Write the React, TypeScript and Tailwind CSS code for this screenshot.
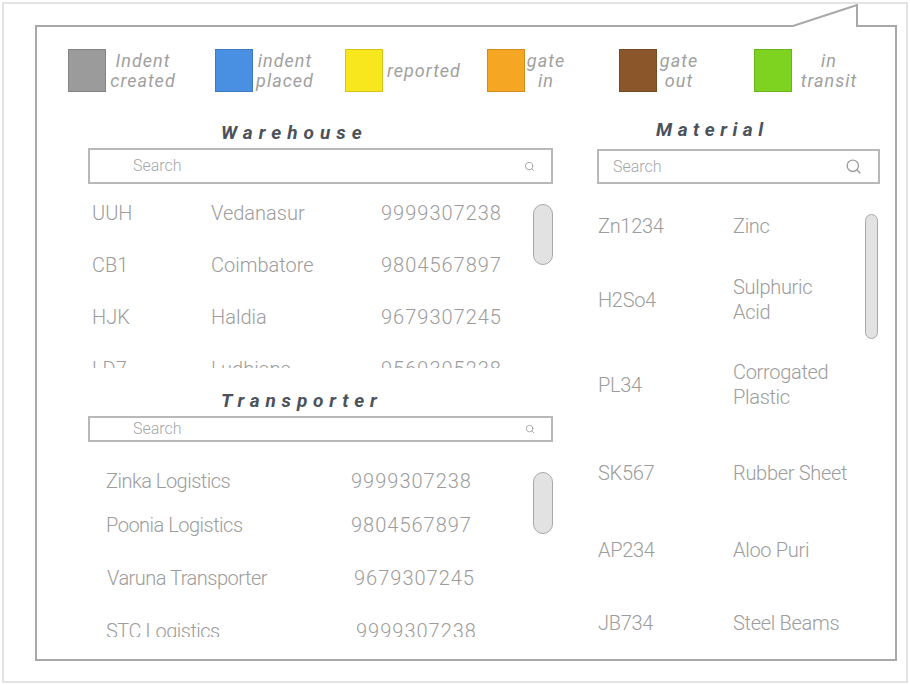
import React from "react";
import { Search } from "lucide-react";

type Legend = {
  label: string[];
  swatch: string;
  item: string;
  text: string;
};

const legend: Legend[] = [
  { label: ["Indent", "created"], swatch: "bg-[#9b9b9b]", item: "w-[147px]", text: "w-[74px]" },
  { label: ["indent", "placed"], swatch: "bg-[#4a90e2]", item: "w-[130px]", text: "w-[64px]" },
  { label: ["reported"], swatch: "bg-[#f8e71c]", item: "w-[142px]", text: "w-[82px]" },
  { label: ["gate", "in"], swatch: "bg-[#f5a623]", item: "w-[132px]", text: "w-[42px]" },
  { label: ["gate", "out"], swatch: "bg-[#8b572a]", item: "w-[135px]", text: "w-[44px]" },
  { label: ["in", "transit"], swatch: "bg-[#7ed321]", item: "w-[110px]", text: "w-[66px] ml-[4px]" },
];

const warehouses = [
  ["UUH", "Vedanasur", "9999307238"],
  ["CB1", "Coimbatore", "9804567897"],
  ["HJK", "Haldia", "9679307245"],
  ["LD7", "Ludhiana", "9569305238"],
];

const transporters = [
  { name: "Zinka Logistics", phone: "9999307238", row: "h-[44px]", ph: "ml-[0px]" },
  { name: "Poonia Logistics", phone: "9804567897", row: "h-[44px]", ph: "ml-[0px]" },
  { name: "Varuna Transporter", phone: "9679307245", row: "h-[62px] pl-[1px]", ph: "ml-[2px]" },
  { name: "STC Logistics", phone: "9999307238", row: "h-[44px]", ph: "ml-[5px]" },
];

const materials = [
  { code: "Zn1234", name: ["Zinc"], row: "h-[74px]" },
  { code: "H2So4", name: ["Sulphuric", "Acid"], row: "h-[74px]" },
  { code: "PL34", name: ["Corrogated", "Plastic"], row: "h-[96px]" },
  { code: "SK567", name: ["Rubber Sheet"], row: "h-[80px]" },
  { code: "AP234", name: ["Aloo Puri"], row: "h-[74px]" },
  { code: "JB734", name: ["Steel Beams"], row: "h-[72px]" },
];

function Thumb({ cls }: { cls: string }) {
  return (
    <div
      className={
        "rounded-full bg-[#e2e2e2] border-[1.5px] border-[#a9a9a9] " + cls
      }
    />
  );
}

function SearchBox({
  h,
  pad,
  icon,
}: {
  h: string;
  pad: string;
  icon: number;
}) {
  return (
    <div
      className={
        "flex items-center justify-between border-2 border-[#b8b8b8] pr-[16px] " +
        h +
        " " +
        pad
      }
    >
      <span className="text-[16px] font-light text-[#a6a6a6]">Search</span>
      <Search size={icon} strokeWidth={2} className="text-[#9f9f9f]" />
    </div>
  );
}

export default function App() {
  return (
    <div className="w-[910px] h-[685px] bg-white pt-[2px] pl-[2px] font-['Roboto',sans-serif]">
      <div className="w-[906px] h-[681px] border-2 border-[#e3e3e3]">
        <div className="relative ml-[31px] mt-[22px] w-[862px] h-[635px] border-l-2 border-r-2 border-b-2 border-[#a8a8a8]">
          <svg
            className="absolute left-[-2px] top-[-22px]"
            width="862"
            height="24"
            viewBox="0 0 862 24"
          >
            <path
              d="M0 22 H758 L822 1 V22 H862"
              fill="none"
              stroke="#a8a8a8"
              strokeWidth="2"
            />
          </svg>

          {/* legend */}
          <div className="flex pt-[23px] pl-[31px]">
            {legend.map((l) => (
              <div key={l.label.join(" ")} className={"flex items-center " + l.item}>
                <div
                  className={
                    "w-[38px] h-[43px] border border-black/15 shrink-0 " + l.swatch
                  }
                />
                <div
                  className={
                    "text-center italic text-[18px] leading-[20px] tracking-[1px] text-[#a0a0a0] " +
                    l.text
                  }
                >
                  {l.label.map((t) => (
                    <div key={t}>{t}</div>
                  ))}
                </div>
              </div>
            ))}
          </div>

          <div className="flex gap-[44px] pl-[51px] mt-[29px]">
            {/* left column */}
            <div className="w-[465px]">
              <h2 className="h-[24px] leading-[24px] pl-[133px] text-[19px] font-bold italic tracking-[6px] text-[#4b525c]">
                Warehouse
              </h2>
              <div className="mt-[3px]">
                <SearchBox h="h-[36px]" pad="pl-[43px]" icon={11} />
              </div>
              <div className="flex h-[182px] overflow-hidden mt-[2px]">
                <div className="flex-1 pt-[1px] pl-[4px]">
                  {warehouses.map((w) => (
                    <div
                      key={w[0]}
                      className="flex items-center h-[52px] text-[20px] font-light text-[#9c9c9c]"
                    >
                      <span className="w-[119px]">{w[0]}</span>
                      <span className="w-[170px]">{w[1]}</span>
                      <span className="tracking-[1px]">{w[2]}</span>
                    </div>
                  ))}
                </div>
                <div className="w-[20px] pt-[18px]">
                  <Thumb cls="w-[20px] h-[61px]" />
                </div>
              </div>

              <h2 className="mt-[21px] h-[24px] leading-[24px] pl-[133px] text-[19px] font-bold italic tracking-[5.8px] text-[#4b525c]">
                Transporter
              </h2>
              <div className="mt-[3px]">
                <SearchBox h="h-[26px]" pad="pl-[43px]" icon={10} />
              </div>
              <div className="flex h-[193px] overflow-hidden mt-[2px]">
                <div className="flex-1 pt-[15px] pl-[18px]">
                  {transporters.map((t) => (
                    <div
                      key={t.name}
                      className={
                        "flex items-center text-[20px] font-light tracking-[-0.5px] text-[#9c9c9c] " +
                        t.row
                      }
                    >
                      <span className="w-[245px]">{t.name}</span>
                      <span className={"tracking-[1px] " + t.ph}>{t.phone}</span>
                    </div>
                  ))}
                </div>
                <div className="w-[20px] pt-[28px]">
                  <Thumb cls="w-[20px] h-[62px]" />
                </div>
              </div>
            </div>

            {/* right column */}
            <div className="w-[283px]">
              <h2 className="-mt-[3px] h-[24px] leading-[24px] pl-[59px] text-[19px] font-bold italic tracking-[5.5px] text-[#4b525c]">
                Material
              </h2>
              <div className="mt-[7px]">
                <SearchBox h="h-[35px]" pad="pl-[14px]" icon={17} />
              </div>
              <div className="flex">
                <div className="flex-1 pt-[5px] pl-[1px]">
                  {materials.map((m) => (
                    <div
                      key={m.code}
                      className={
                        "flex items-center text-[20px] font-light tracking-[-0.3px] text-[#9c9c9c] " +
                        m.row
                      }
                    >
                      <span className="w-[135px]">{m.code}</span>
                      <span className="leading-[25px]">
                        {m.name.map((n) => (
                          <div key={n}>{n}</div>
                        ))}
                      </span>
                    </div>
                  ))}
                </div>
                <div className="w-[13px] pt-[30px] mr-[2px]">
                  <Thumb cls="w-[13px] h-[125px]" />
                </div>
              </div>
            </div>
          </div>
        </div>
      </div>
    </div>
  );
}
